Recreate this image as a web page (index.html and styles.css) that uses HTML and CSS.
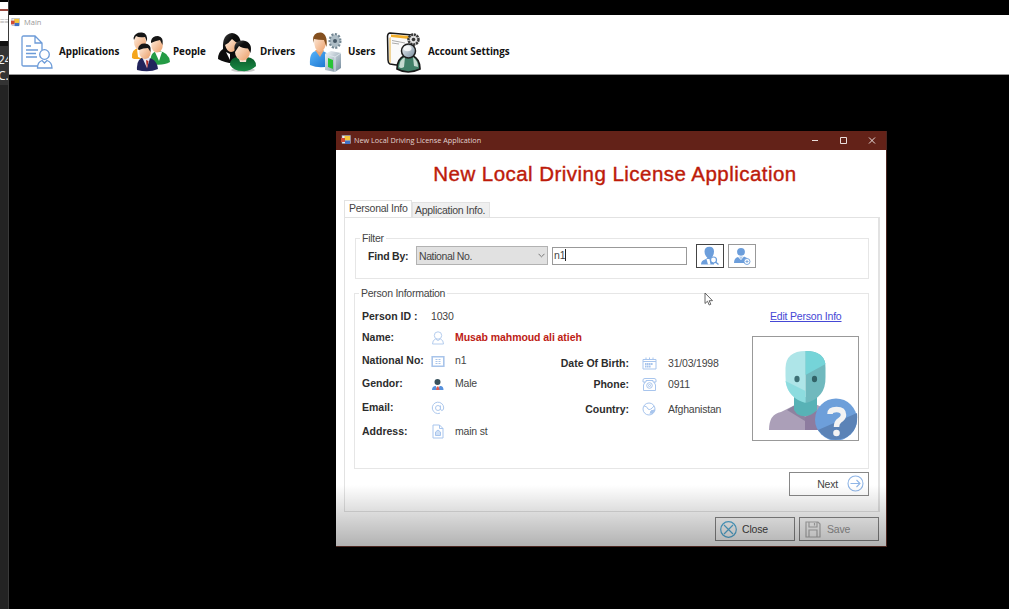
FILE: index.html
```html
<!DOCTYPE html>
<html lang="en">
<head>
<meta charset="utf-8">
<title>Main</title>
<link rel="stylesheet" href="styles.css">
</head>
<body>
<svg class="defs" width="0" height="0">
  <defs>
    <linearGradient id="skin" x1="0" y1="0" x2="1" y2="1"><stop offset="0" stop-color="#fff0e2"/><stop offset="1" stop-color="#eb9d67"/></linearGradient>
    <linearGradient id="steel" x1="0" y1="0" x2="1" y2="1"><stop offset="0" stop-color="#f6f9fb"/><stop offset="1" stop-color="#71889a"/></linearGradient>
    <linearGradient id="green" x1="0" y1="0" x2="0" y2="1"><stop offset="0" stop-color="#0a5a2a"/><stop offset="1" stop-color="#198a45"/></linearGradient>
    <linearGradient id="blue" x1="0" y1="0" x2="1" y2="1"><stop offset="0" stop-color="#58b4fa"/><stop offset="1" stop-color="#1670cc"/></linearGradient>
    <linearGradient id="dark" x1="0" y1="0" x2="1" y2="1"><stop offset="0" stop-color="#555"/><stop offset=".4" stop-color="#0c0c0c"/></linearGradient>
    <symbol id="form" viewBox="0 0 10 10">
      <rect x="1" y=".5" width="8.5" height="8" fill="#e8e8ec" stroke="#8a94a8" stroke-width=".5"/>
      <rect x="3.5" y="1" width="5.5" height="4.5" fill="#f5c63a"/><rect x="0" y="3" width="4" height="4" fill="#cf4a35"/><rect x="4" y="5.5" width="5" height="3.5" fill="#3f6fc4"/>
    </symbol>
  </defs>
</svg>

<aside class="behind">
  <div class="behind-page"><i></i><span>≡≡</span></div>
  <div class="behind-text"><span>24</span><span>C.</span></div>
</aside>

<section class="main-window">
  <header class="main-title"><svg width="9" height="9"><use href="#form"/></svg><span>Main</span></header>
  <nav class="menu">
    <a class="item m1">
      <svg width="32" height="34" viewBox="0 0 32 34" fill="none" stroke="#6c9bd8" stroke-width="1.3">
        <path d="M17 31H2.500Q1 31 1 29.500V2.500Q1 1 2.500 1H14L21 8V15M14 1V8H21M5 11H10M5 15H17M5 18.500H15M5 22H16"/>
        <circle cx="23.500" cy="19.500" r="4.800" fill="#fff"/><path fill="#fff" d="M16.500 33C16.500 28 18 26.500 21 25.500L23.500 28L26 25.500C29 26.500 31 28 31 33Z"/>
      </svg><span>Applications</span></a>
    <a class="item m2">
      <svg width="40" height="40" viewBox="0 0 40 40">
        <path d="M1 26Q0 17 8 16L14 18V27H3Z" fill="#f4a51c"/><path d="M6 17L12 20V27L7 25Z" fill="#fff"/>
        <ellipse cx="9" cy="10" rx="6" ry="8" fill="url(#skin)"/><path d="M2.500 6Q4 0 11 .5Q17 1 16 10L14 5Q8 6 5 4Q4 6 3 8Z" fill="#161616"/>
        <path d="M20 32Q18 20 27 19Q38 20 39 30Q32 34 20 32Z" fill="#249b45"/><path d="M24 20L28 29L31 20Z" fill="#fff"/>
        <ellipse cx="26" cy="13" rx="5.800" ry="7.500" fill="url(#skin)"/><path d="M20 9Q21 4 27 4Q33 5 31.500 13L29 8Q24 9 20 11Z" fill="#161616"/>
        <path d="M6 38Q5 26 14 25Q26 26 27 37Q18 41 6 38Z" fill="#22245c"/><path d="M11 25L16 36L19 26Z" fill="#e8e8f4"/><path d="M15 28L16 37L17.500 29Z" fill="#b32a24"/>
        <ellipse cx="14" cy="20" rx="5.800" ry="7" fill="url(#skin)"/><path d="M7 17Q8 11 14 11.500Q21 12 19.500 20L17 16Q12 16 8 18Z" fill="#161616"/>
      </svg><span>People</span></a>
    <a class="item m3">
      <svg width="39" height="40" viewBox="0 0 39 40">
        <path d="M0 27Q0 20 5 17Q4 2 14 1Q24 2 23 17L19 31Q8 32 0 27Z" fill="url(#dark)"/>
        <path d="M7 13Q11 11 14 7Q17 10 20 11Q18 20 13 20Q9 20 7 13Z" fill="url(#skin)"/><path d="M8 20L12 22L12 28Z" fill="#fff"/>
        <ellipse cx="25" cy="38" rx="12" ry="2" fill="#ccc"/>
        <path d="M12 33Q12 25 21 25H29Q38 26 38 34Q32 40 24 39Q16 39 12 33Z" fill="url(#green)"/>
        <path d="M20 24H29L28 30H22Z" fill="#f8ded0"/><ellipse cx="24.500" cy="20" rx="7.500" ry="8.500" fill="url(#skin)"/>
        <path d="M17 20Q14 9 25 8.500Q35 10 32.500 21L30 16.500Q24 16 21 14Q19 17 17 20Z" fill="url(#dark)"/>
      </svg><span>Drivers</span></a>
    <a class="item m4">
      <svg width="34" height="41" viewBox="0 0 34 41">
        <path d="M1 33Q0 20 7 19H14Q21 21 21 34Q10 37 1 33Z" fill="url(#blue)"/><path d="M6 18L11 25L15 18Z" fill="#e9a574"/>
        <path d="M5 7Q6 2 12 2Q18 4 17 12Q15 20 10 20Q5 18 5 7Z" fill="url(#skin)"/><path d="M4 8Q4 0 12 .5Q19 2 17.500 15L15 8Q9 8 5 7L4 11Z" fill="#84501f"/>
        <ellipse cx="26" cy="9" rx="5" ry="6.500" fill="#a4b6c1" stroke="#738793" stroke-width="3" stroke-dasharray="2 1.300"/><ellipse cx="26" cy="9" rx="4.500" ry="6" fill="#aebdc6"/><circle cx="26" cy="9" r="2" fill="#455866"/>
        <path d="M16 22L22 19L32 21V36L26 40L16 38Z" fill="url(#steel)"/><path d="M16 22L26 25V40M26 25L32 21" stroke="#dce6ec" fill="none"/><path d="M19 26L24 28V37L19 35Z" fill="#29c437"/>
      </svg><span>Users</span></a>
    <a class="item m5">
      <svg width="36" height="42" viewBox="0 0 36 42">
        <path d="M4 2L26 4Q28 5 28 8L27 34Q20 36 4 33Q2 32 2 29L1.500 5Q2 2 4 2Z" fill="#fafafa" stroke="#171717" stroke-width="1.500"/>
        <path d="M5 3.500L23 5V8L5 6Z" fill="#f1ae2b"/><path d="M3 7V31L5 32V6Z" fill="#efd49a"/><path d="M6 9.500L19 12M6 12L13 13" stroke="#888" stroke-width=".7"/>
        <circle cx="27.500" cy="8.500" r="5" fill="#ddd" stroke="#3a3a3a" stroke-width="2.500" stroke-dasharray="2.200 .7"/><circle cx="27.500" cy="8.500" r="1.800" fill="#333"/>
        <path d="M11 38Q11 28 18 25H27Q34 28 34 38Q22 44 11 38Z" fill="#407f68" stroke="#181818" stroke-width="1.700"/><path d="M19 26L18 36Q15 38 13 36Q14 28 19 26M27 26L28 35L32 36Q32 30 27 26" fill="#c5dad1"/>
        <circle cx="22.500" cy="20" r="7" fill="url(#steel)" stroke="#1e1e1e" stroke-width="1.500"/><ellipse cx="21.500" cy="17.500" rx="4" ry="2.800" fill="#fff" opacity=".8"/>
      </svg><span>Account Settings</span></a>
  </nav>
</section>

<section class="dialog">
  <header class="bar">
    <svg width="10" height="10"><use href="#form"/></svg><span class="bar-text">New Local Driving License Application</span>
    <svg class="controls" width="66" height="10" viewBox="0 0 66 10" fill="none" stroke="#eadedc"><path d="M1 5.500H7M29.500 2.500H35.500V8.500H29.500ZM58 2.500L64 8.500M64 2.500L58 8.500"/></svg>
  </header>
  <h1>New Local Driving License Application</h1>
  <div class="tabs"><div class="tab on">Personal Info</div><div class="tab off">Application Info.</div></div>
  <div class="panel">
    <fieldset class="filter">
      <legend class="t-filter">Filter</legend>
      <div class="filter-row">
        <b>Find By:</b>
        <div class="combo"><span>National No.</span><svg width="7" height="5" fill="none" stroke="#777"><path d="M.5 .8L3.500 3.800L6.500 .8"/></svg></div>
        <div class="input"><span>n1</span><i></i></div>
        <div class="ibtn focus"><svg width="20" height="20" viewBox="0 0 20 20"><path d="M1 18.500Q1 14.500 5 13.500L7.500 12Q4.500 9 4.500 5.500Q4.500 .8 9.500 .8Q14 .8 14 5.500Q14 9 11.500 12L14 13V18.500Z" fill="#6c9edb"/><path d="M6.500 13L8 18.500H10.500L9.500 13Z" fill="#fff"/><circle cx="13.500" cy="14" r="3" fill="#fff" stroke="#6c9edb" stroke-width="1.200"/><path d="M15.500 16L18.500 18.500" stroke="#6c9edb" stroke-width="1.400"/></svg></div>
        <div class="ibtn"><svg width="20" height="20" viewBox="0 0 20 20"><circle cx="9" cy="5.800" r="3.900" fill="#6c9edb"/><path d="M2 17Q2 12 6 11L9 14L12 10.500L15 12V17Z" fill="#6c9edb"/><path d="M7 10.500L9 14L11 10.500Z" fill="#b5cfee"/><circle cx="15" cy="15.500" r="3" fill="#fff" stroke="#6c9edb" stroke-width=".9"/><path d="M13.500 15.500H16.500M15 14V17" stroke="#6c9edb" stroke-width=".8"/></svg></div>
      </div>
    </fieldset>
    <fieldset class="person">
      <legend class="t-person">Person Information</legend>
      <div class="person-body">
        <div class="left">
          <b>Person ID :</b><span class="id">1030</span>
          <b>Name:</b><svg width="14" height="14" viewBox="0 0 14 14" fill="none" stroke="#b5cdee"><circle cx="7" cy="4.500" r="3.700"/><path d="M1.500 13Q1.500 9 4.500 8L7 9.500L9.500 8Q12.500 9 12.500 13Z"/></svg><strong>Musab mahmoud ali atieh</strong>
          <b class="wide">National No:</b><svg width="14" height="14" viewBox="0 0 14 14" fill="none" stroke="#a8c4ea"><path stroke-width="1.600" d="M1.200 2.700H12.800V12.300H1.200Z"/><path d="M4.500 5.500H9.500M4.500 7.500H9.500M4.500 9.500H9.500" stroke-dasharray="2 1"/></svg><span>n1</span>
          <b>Gendor:</b><svg width="14" height="14" viewBox="0 0 14 14"><circle cx="6.500" cy="5" r="3" fill="#38515c"/><path d="M1 13Q1 9.500 4 9H10Q12.500 9.500 12.500 13Z" fill="#5791dc"/><path d="M4.500 8.500L6.500 13L9 8.500Z" fill="#fff"/><path d="M6 9.500H7.500L8.500 13H5Z" fill="#df594e"/></svg><span>Male</span>
          <b>Email:</b><svg width="14" height="14" viewBox="0 0 14 14" fill="none" stroke="#adc8ed"><path d="M9 12.200A5.700 5.700 0 1 1 12.700 7Q12.500 9.500 10.800 9.500Q9.500 9.500 9.500 7.500V4.500"/><circle cx="7" cy="7" r="2.500"/></svg><span></span>
          <b>Address:</b><svg width="14" height="15" viewBox="0 0 14 15" fill="none" stroke="#a8c5ed"><path d="M2 1H8.500L12 4.500V14H2ZM8.500 1V4.500H12"/><path d="M4.500 8L7 6L9.500 8V11.500H4.500Z" fill="#cfe0f6"/></svg><span class="addr">main st</span>
        </div>
        <div class="right">
          <b>Date Of Birth:</b><svg width="15" height="13" viewBox="0 0 15 13" fill="none" stroke="#a8c5ed"><path d="M1 2.500H14V12H1ZM1 4.500H14M4 .5V3M7.500 .5V3M11 .5V3"/><path d="M3 7H11M3 9.500H9" stroke-width="2" stroke-dasharray="1.600 .4"/></svg><span class="date">31/03/1998</span>
          <b>Phone:</b><svg width="15" height="15" viewBox="0 0 15 15" fill="none" stroke="#a8c5ed"><path d="M1 5V3Q1 1.500 3 1.500H12Q14 1.500 14 3V5H11V3.500H4V5ZM3 5L1.500 8V13.500H13.500V8L12 5"/><circle cx="7.500" cy="8.500" r="2.800"/><circle cx="7.500" cy="8.500" r="1"/></svg><span>0911</span>
          <b>Country:</b><svg width="14" height="14" viewBox="0 0 14 14" fill="none" stroke="#a8c5ed"><circle cx="7" cy="7" r="6"/><path d="M2 4Q5 4 6 7Q8 9 12 4M8 12L9 9L12.500 8" /><path d="M9 9L13 8L10 12Z" fill="#a8c5ed"/></svg><span class="country">Afghanistan</span>
        </div>
        <div class="side">
          <a>Edit Person Info</a>
          <div class="photo">
            <svg width="105" height="103" viewBox="0 0 105 103">
              <path d="M16 93Q16 77 28 75L44 67H62L80 75Q89 79 89 93Z" fill="#ab9fb8"/><path d="M52 80L70 70L82 77V93H52Z" fill="#8d7c9f"/><path d="M34 73L42 68L52 80V84Z" fill="#8e829f"/>
              <path d="M41 60H64V73Q54 83 44 77L41 73Z" fill="#58b2b6"/>
              <path d="M32.500 31Q33 14 52.500 14V65Q32 60 32.500 39Z" fill="#aee5e8"/><path d="M52.500 14Q73 14 72.500 31V40Q73 61 52.500 66Z" fill="#70b9be"/><path d="M52.500 14Q70 14 72.500 27L52.500 38Z" fill="#75d4d8"/><path d="M32.500 44L52.500 54V66Q35 61 32.500 44Z" fill="#8ddcdf"/>
              <ellipse cx="44" cy="42" rx="2.600" ry="3.300" fill="#3d7075"/><ellipse cx="61.500" cy="42" rx="2.600" ry="3.300" fill="#326368"/>
              <circle cx="83" cy="82.500" r="21" fill="#6d9fda"/><path d="M65 93L104 76Q106 94 92 101Q75 107 65 93Z" fill="#5b83b7"/>
              <path d="M77 77Q77 72.500 83.500 72.500Q90.500 72.500 90.500 78Q90.500 81 86.500 83.500Q83.500 85.500 83.500 90" fill="none" stroke="#f3f3f3" stroke-width="5.500"/><circle cx="83.500" cy="96" r="3.300" fill="#f3f3f3"/>
            </svg>
          </div>
        </div>
      </div>
    </fieldset>
    <div class="next btn"><span>Next</span><svg width="17" height="17" viewBox="0 0 17 17" fill="none" stroke="#8fb5e6" stroke-width="1.100"><circle cx="8.500" cy="8.500" r="7.500"/><path d="M3.500 8.500H13M9.500 5L13 8.500L9.500 12"/></svg></div>
  </div>
  <footer>
    <div class="btn close"><svg width="17" height="17" viewBox="0 0 17 17" fill="none" stroke="#55b0dc" stroke-width="1.200"><circle cx="8.500" cy="8.500" r="7.800"/><path d="M4 4L13 13M13 4L4 13"/></svg><span>Close</span></div>
    <div class="btn save"><svg width="16" height="17" viewBox="0 0 16 17" fill="none" stroke="#b4b4b4" stroke-width="1.200"><path d="M1 1H13L15 3V16H1ZM4 1V6H12V1M9.500 2V4.500M4 16V9H12V16"/></svg><span>Save</span></div>
  </footer>
  <div class="shade"></div>
</section>
<svg class="cursor" width="10" height="14" viewBox="0 0 10 14"><path d="M1 1V11.500L3.500 9.200L5.200 13L6.800 12.300L5.200 8.700H8.500Z" fill="#fff" stroke="#555" stroke-width=".9"/></svg>
</body>
</html>
```
FILE: styles.css
```css
* { box-sizing: border-box; }
body { margin: 0; width: 1009px; height: 609px; overflow: hidden; position: relative; background: #000; font: 10.5px/14px "Liberation Sans", Arial, sans-serif; letter-spacing: -.2px; color: #444; white-space: nowrap; }
svg { display: block; flex: none; }
.defs { position: absolute; }
h1 { margin: 0; }

.behind { position: absolute; left: 0; top: 0; width: 9px; height: 609px; overflow: hidden; background: #232323; border-right: 1px solid #3a3a3a; display: flex; flex-direction: column; }
.behind-page { height: 41px; background: #fff; border-top: 2px solid #000; padding-top: 7px; font-size: 8px; color: #aaa; }
.behind-page i { display: block; height: 2px; background: #99483f; margin-bottom: 4px; }
.behind-text { height: 44px; background: #333; color: #eee; display: flex; flex-direction: column; gap: 1px; font: 12px/15px "Noto Sans", sans-serif; border-top: 5px solid #111; padding-top: 6px; }
.behind-text span { margin-left: -2px; }

.main-window { position: absolute; left: 9px; top: 15px; width: 1000px; height: 60px; background: #fff; border-bottom: 1px solid #999; }
.main-title { display: flex; align-items: center; gap: 4px; height: 14px; padding-left: 2px; font: 7.5px/14px "Open Sans", sans-serif; color: #999; letter-spacing: 0; }
.menu { display: flex; align-items: center; height: 46px; padding-left: 12px; }
.item { display: flex; align-items: center; font: 700 9.8px/14px "Open Sans", sans-serif; color: #111; letter-spacing: -.03px; }
.m1 { width: 110px; gap: 6px; }
.m2 { width: 87px; gap: 2px; }
.m3 { width: 91px; gap: 3px; }
.m4 { width: 77px; gap: 5px; }
.m5 { gap: 6px; }

.dialog { position: absolute; left: 336px; top: 131px; width: 551px; height: 416px; background: #fff; border: solid #4a2620; border-width: 0 1px 1px 0; display: flex; flex-direction: column; }
.bar { height: 19px; background: #632218; display: flex; align-items: center; padding: 0 9px 1px 5px; gap: 3px; }
.bar-text { flex: 1; font: 7.3px/14px "Open Sans", sans-serif; color: #e2d3d0; letter-spacing: -.02px; }
h1 { height: 50px; padding: 11px 0 0 8px; text-align: center; font-weight: 400; font-size: 20.5px; line-height: 25px; letter-spacing: .46px; color: #bd1b0a; -webkit-text-stroke: .4px #bd1b0a; }
.tabs { display: flex; align-items: flex-end; height: 17px; padding-left: 8px; }
.tab { border: 1px solid #e2e2e2; border-bottom: 0; }
.on { width: 68px; height: 17px; padding: 0 4px; letter-spacing: -.25px; }
.off { width: 78px; height: 15px; padding: 0 2px; background: #efefef; letter-spacing: -.27px; }
.panel { margin-left: 8px; width: 536px; height: 295px; border: 1px solid #e2e2e2; border-right-width: 2px; padding: 13px 10px 0 10px; }
fieldset { margin: 0; padding: 0; border: 1px solid #e6e6e6; min-width: 0; }
legend { padding: 0 2px; margin-left: 4px; height: 14px; letter-spacing: -.25px; }
.filter { width: 514px; height: 48px; }
.filter-row { display: flex; align-items: center; height: 23px; padding-left: 12px; margin-top: -1px; }
.filter-row b { width: 48px; letter-spacing: -.2px; }
b, strong { color: #2c2c2c; letter-spacing: 0; }
.combo { width: 132px; height: 19px; margin-right: 4px; background: #e1e1e1; border: 1px solid #b2b2b2; display: flex; align-items: center; justify-content: space-between; padding: 0 2px; letter-spacing: -.4px; }
.input { width: 135px; height: 18px; margin-right: 9px; border: 1px solid #999; display: flex; align-items: center; padding: 0 0 1px 1px; }
.input i { width: 1px; height: 12px; background: #222; }
.ibtn { width: 28px; height: 24px; margin-right: 4px; border: 1px solid #999; display: grid; place-items: center; }
.ibtn.focus { border-color: #444; }

.person { width: 515px; height: 183px; margin: 7px 0 0 -1px; }
.person-body { display: flex; height: 160px; padding-left: 7px; }
.left { width: 190px; display: grid; grid-template-columns: 69px 24px 1fr; grid-template-rows: 21px 21px 25px 21px 27px 21px; align-items: center; padding-top: 11px; margin-top: -6px; align-content: start; }
.left svg { position: relative; top: 1px; }
.id { grid-column: 2 / 4; }
strong { color: #bd2115; letter-spacing: -.07px; }
.right { width: 200px; display: grid; grid-template-columns: 77px 39px 1fr; grid-template-rows: 20px 22px 28px; align-items: center; align-content: start; padding-top: 53px; }
.right b { text-align: right; }
.right svg { margin-left: 13px; }
.side { display: flex; flex-direction: column; padding-top: 9px; }
.side a { color: #4548d5; text-decoration: underline; margin-left: 18px; }
.photo { width: 107px; height: 105px; border: 1px solid #999; margin-top: 13px; }

.btn { border: 1px solid #888; height: 24px; display: flex; align-items: center; background: #fff; }
.next { width: 80px; margin: 3px 0 0 434px; justify-content: flex-end; gap: 9px; padding: 0 4px 1px 0; }
footer { display: flex; padding: 5px 0 0 379px; gap: 4px; }
.close { width: 80px; padding-left: 4px; gap: 5px; }
.save { width: 80px; padding-left: 5px; gap: 6px; color: #999; }
.shade { position: absolute; left: 0; right: 0; bottom: 0; height: 61px; background: linear-gradient(rgba(0,0,0,0), rgba(0,0,0,.13) 42%, rgba(0,0,0,.3)); }
.cursor { position: absolute; left: 704px; top: 292px; }
```
